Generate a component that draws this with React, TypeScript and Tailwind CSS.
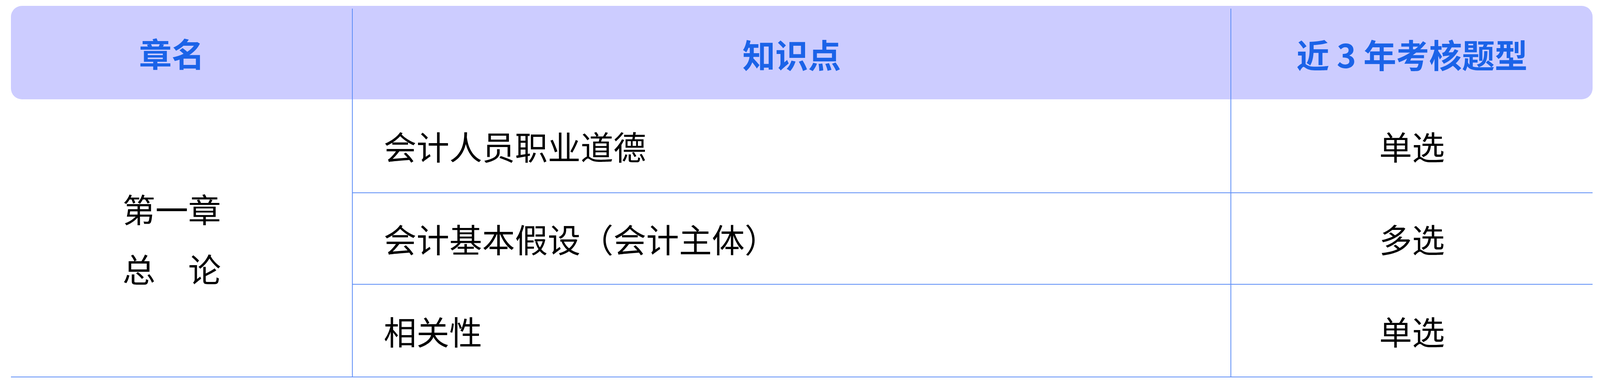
const rows = [
  { point: '会计人员职业道德', type: '单选', h: 'h-[240px]' },
  { point: '会计基本假设（会计主体）', type: '多选', h: 'h-[234px]' },
  { point: '相关性', type: '单选', h: 'h-[235px]' },
];

const cols = 'grid grid-cols-[minmax(0,925fr)_minmax(0,2383fr)_minmax(0,982fr)]';
const line = 'border-[#5c8df6]';

export default function App() {
  return (
    <div
      className="h-[982px] w-full bg-white pt-[15px] pl-[0.69%] pr-[0.46%]"
      style={{ fontFamily: '"Noto Sans CJK SC", "Noto Sans", sans-serif' }}
    >
      {/* header */}
      <div className={`${cols} h-[239px] rounded-[28px] bg-[#ccccff] text-[84px] font-bold text-[#1b63e8]`}>
        <div className="flex items-center justify-center pr-[50px]">章名</div>
        <div className={`mt-[7px] flex items-center justify-center border-l-2 ${line}`}>知识点</div>
        <div className={`mt-[7px] flex items-center justify-center whitespace-nowrap border-l-2 ${line}`}>近 3 年考核题型</div>
      </div>

      {/* body */}
      <div className={`${cols} border-b-2 ${line} text-[84px] text-black`}>
        <div className="row-span-3 flex flex-col items-center justify-center pr-[50px] leading-[153px]">
          <span>第一章</span>
          <span>总　论</span>
        </div>
        {rows.map((r, i) => {
          const bb = i < rows.length - 1 ? `border-b-2 ${line}` : '';
          return [
            <div key={`p${i}`} className={`flex ${r.h} items-center whitespace-nowrap border-l-2 ${line} ${bb} pl-[79px]`}>{r.point}</div>,
            <div key={`t${i}`} className={`flex ${r.h} items-center justify-center border-l-2 ${line} ${bb}`}>{r.type}</div>,
          ];
        })}
      </div>
    </div>
  );
}
